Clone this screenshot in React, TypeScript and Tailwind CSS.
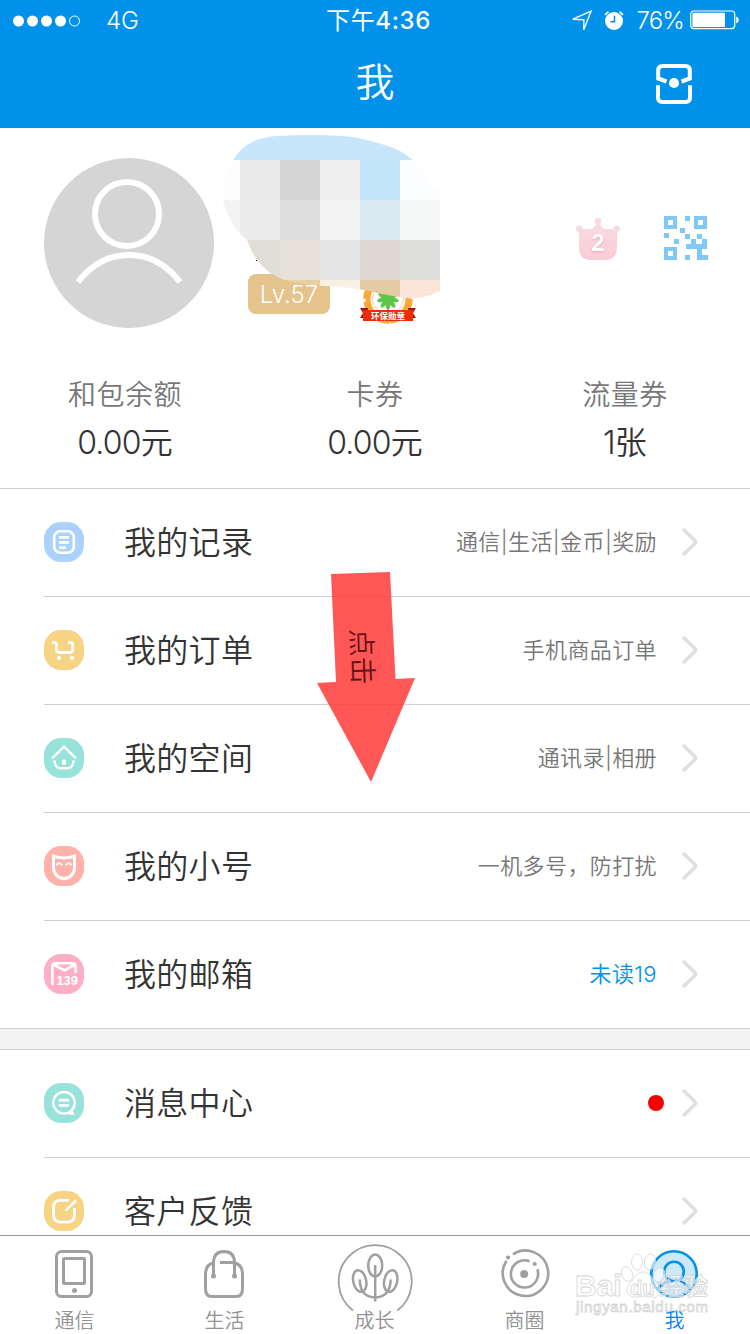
import React from 'react';

interface MenuItem {
  label: string;
  hint?: string;
  color: string;
  icon: React.ReactNode;
  highlight?: boolean;
  dot?: boolean;
}

const stats = [
  { label: '和包余额', value: '0.00元' },
  { label: '卡券', value: '0.00元' },
  { label: '流量券', value: '1张' },
];

const mainItems: MenuItem[] = [
  {
    label: '我的记录',
    hint: '通信|生活|金币|奖励',
    color: 'bg-[#abd2ff]',
    icon: (
      <>
        <rect x="10.2" y="9.3" width="19.6" height="21.4" rx="6" strokeWidth="2.6" />
        <path d="M15 15.4h10M15 20.4h10M15 25.6h7" />
      </>
    ),
  },
  {
    label: '我的订单',
    hint: '手机商品订单',
    color: 'bg-[#f7d384]',
    icon: (
      <>
        <path d="M8 12.5h2.5q1.8 0 2 1.8v5.2q0 3 3 3h10.2q3 0 3-3v-5q0-2-2-2H24" />
        <circle cx="15" cy="28" r="2.1" fill="white" stroke="none" />
        <circle cx="28" cy="28" r="2.1" fill="white" stroke="none" />
      </>
    ),
  },
  {
    label: '我的空间',
    hint: '通讯录|相册',
    color: 'bg-[#98e2dc]',
    icon: (
      <>
        <path d="M8 20.3 20 8.6l12 11.7" strokeWidth="2.4" />
        <path d="M10.4 22.5q.6 7.8 6.6 7.8h6q6 0 6.6-7.8" strokeWidth="2.4" />
        <rect x="18" y="21.5" width="4" height="5.5" rx="1.4" fill="white" stroke="none" />
      </>
    ),
  },
  {
    label: '我的小号',
    hint: '一机多号，防打扰',
    color: 'bg-[#ffb2a9]',
    icon: (
      <>
        <path d="M9.5 10.2q10.5 3.6 21 0v11.6a10.5 10.7 0 0 1-21 0z" strokeWidth="3" />
        <path d="M12.7 19.2q2.7-4.4 5.4 0M21.9 19.2q2.7-4.4 5.4 0" strokeWidth="2" />
      </>
    ),
  },
  {
    label: '我的邮箱',
    hint: '未读19',
    color: 'bg-[#ffafc3]',
    highlight: true,
    icon: (
      <>
        <path d="M8.4 31V12.3q0-3 3-3h17.2q3 0 3 3V19M9.5 10.5l11 6 10.5-6" strokeWidth="2.6" />
        <text x="12.4" y="31" className="fill-white stroke-none font-['Liberation_Sans',sans-serif] text-[13px] font-bold">
          139
        </text>
      </>
    ),
  },
];

const moreItems: MenuItem[] = [
  {
    label: '消息中心',
    color: 'bg-[#98e2dc]',
    dot: true,
    icon: (
      <>
        <circle cx="20" cy="19.8" r="10.8" strokeWidth="2.4" />
        <path d="M23.5 30.5 28 26.8 30.8 31.8q-4 .8-7.3-1.3" fill="white" stroke="none" />
        <path d="M14.7 17.2h10.3M14.7 22.4h10.3" />
      </>
    ),
  },
  {
    label: '客户反馈',
    color: 'bg-[#f7d384]',
    icon: (
      <>
        <path d="M25 9.4h-8.5q-7 0-7 7v7.7q0 7 7 7h7q7 0 7-7V17" strokeWidth="2.8" />
        <path d="M21.7 19.7 32 9.3" strokeWidth="2.4" />
      </>
    ),
  },
];

function StatusBar() {
  return (
    <div className="grid h-10 grid-cols-3 items-center pt-px text-2xl">
      <div className="flex items-center pl-[13px]">
        <svg width="68" height="12" fill="white">
          {[5.5, 19.5, 33.5, 47.5].map((x) => (
            <circle key={x} cx={x} cy="6" r="5.5" />
          ))}
          <circle cx="61.5" cy="6" r="5" fill="none" stroke="white" />
        </svg>
        <span className="ml-[25px] font-light">4G</span>
      </div>
      <div className="pl-[7px] text-center font-medium tracking-[0.6px]">
        <span className="font-normal">下午</span>4:36
      </div>
      <div className="flex items-center justify-end pr-[11px]">
        <svg width="22" height="22" fill="none" stroke="white" strokeWidth="1.4">
          <path d="M2.8 9.2 21 1.2l-7.2 18.5v-10z" />
        </svg>
        <svg className="ml-[11px]" width="22" height="22" fill="none" stroke="white">
          <circle cx="11" cy="11" r="9" fill="white" stroke="none" />
          <path d="M2.2 5A11 11 0 0 1 5.5 1.8M16.5 1.8A11 11 0 0 1 19.8 5" strokeWidth="1.8" />
          <path d="M11.5 5.8v6H7.5" stroke="#0091ea" strokeWidth="1.5" />
        </svg>
        <span className="ml-[11px] mr-[6px] text-2xl font-light tracking-[-0.8px]">76%</span>
        <svg className="-mt-px" width="49" height="20" fill="none" stroke="white">
          <rect x="0.7" y="1" width="44" height="17.6" rx="3" strokeWidth="1.2" />
          <rect x="2.4" y="2.7" width="32.6" height="14.2" rx="1" fill="white" stroke="none" />
          <path d="M46.2 6.5q2.6.8 2.6 3.5t-2.6 3.5z" fill="white" stroke="none" />
        </svg>
      </div>
    </div>
  );
}

function Header() {
  return (
    <header className="h-32 shrink-0 bg-[#0091ea] text-white">
      <StatusBar />
      <div className="grid h-[88px] grid-cols-3">
        <h1 className="col-start-2 text-center text-[39px] font-[350] leading-[84px]">我</h1>
        <svg className="ml-auto mr-[58px] mt-6" width="36" height="40" fill="none" stroke="white" strokeWidth="4">
          <path d="m10.5 17.5-8.3-3V6.5Q2.2 2 6.7 2h22.6q4.5 0 4.5 4.5v8l-8.3 3" />
          <path d="M2 21.3v12.2Q2 38 6.5 38h23q4.5 0 4.5-4.5V21.3" />
          <circle cx="18" cy="19" r="5.1" fill="white" stroke="none" />
        </svg>
      </div>
    </header>
  );
}

// each tile is [x, y, width, height, colour]
const tiles: [number, number, number, number, string][] = [
  [0, 0, 220, 25, '#c7e6fb'],
  [0, 25, 20, 40, '#fdfdfd'],
  [20, 25, 40, 40, '#e9e9e9'],
  [60, 25, 40, 40, '#d5d5d5'],
  [100, 25, 40, 40, '#eeeeee'],
  [140, 25, 40, 40, '#c2e5f9'],
  [180, 25, 40, 40, '#fbfdff'],
  [0, 65, 20, 40, '#f3f3f3'],
  [20, 65, 40, 40, '#ececec'],
  [60, 65, 40, 40, '#dfdfdf'],
  [100, 65, 40, 40, '#f4f4f4'],
  [140, 65, 40, 40, '#daebf4'],
  [180, 65, 40, 40, '#f4f7f6'],
  [0, 105, 60, 40, '#e1ded8'],
  [60, 105, 40, 40, '#e5e0d8'],
  [100, 105, 40, 40, '#e4e4e4'],
  [140, 105, 40, 40, '#ded9d3'],
  [180, 105, 40, 40, '#dfdfdd'],
  [0, 145, 100, 20, '#e6cfa2'],
  [100, 145, 40, 20, '#f9f0e4'],
  [140, 145, 40, 20, '#e4cba2'],
  [180, 145, 40, 20, '#fae5d7'],
];

function Mosaic() {
  return (
    <svg className="absolute left-[220px] top-[7px]" width="220" height="165">
      <clipPath id="smudge">
        <path d="M13 25Q19 15 27 10 40 2 57 1 90-1 123 1 138 2 150 6q18 4 30 10 7 4 13 9 8 7 12 15 3 7 6 13 4 2 9 2v101q-8 4-17 6-8 2-16 1-16-2-30-5-9-3-20-4-17-3-34-3-19-1-36-5-9-3-17-8-8-6-13-13-6-9-10-20-7-5-12-12-5-8-8-16-5-9-4-20 0-19 10-32" />
      </clipPath>
      <g clipPath="url(#smudge)">
        {tiles.map(([x, y, w, h, fill]) => (
          <rect key={`${x}-${y}`} x={x} y={y} width={w} height={h} fill={fill} shapeRendering="crispEdges" />
        ))}
      </g>
      <rect x="36" y="125" width="1" height="1" fill="#222" />
    </svg>
  );
}

function Medal() {
  return (
    <svg className="absolute left-[359px] top-[147px]" width="58" height="50">
      <circle cx="29" cy="24" r="23" fill="none" stroke="#fba83b" strokeWidth="3.5" strokeDasharray="9 3" />
      <circle cx="29" cy="24" r="20" fill="white" stroke="#fba83b" strokeWidth="5" />
      <circle cx="29" cy="24" r="15.5" fill="none" stroke="#fbd08d" strokeWidth="1" />
      <g fill="#5dc74b">
        {[0, 40, 80, 120, 160, 200, 240, 280, 320].map((a) => (
          <ellipse key={a} cx="29" cy="18.5" rx="2.2" ry="5.5" transform={`rotate(${a + 20} 29 24)`} />
        ))}
      </g>
      <path d="m1 33 8 0v10H1l3-5zM57 33l-8 0v10h8l-3-5z" fill="#a31604" />
      <path d="M4 35h50v11H4z" fill="#ee2c05" />
      <text x="29" y="43.5" textAnchor="middle" className="fill-white text-[8.5px] font-bold">
        环保勋章
      </text>
      <path d="m25 46h8l-4 3z" fill="#fba83b" />
    </svg>
  );
}

function QrIcon() {
  return (
    <svg width="44" height="44" fill="#80c8f5" shapeRendering="crispEdges">
      <path
        fillRule="evenodd"
        d="M0 0h13v13H0zM4 4v5h5V4zM30 0h13v13H30zM34 4v5h5V4zM0 31h13v13H0zM4 35v5h5v-5z"
      />
      <path d="M21 0h5v5h-5zM16 12h5v5h-5zM0 17h5v5H0zM21 18h5v5h-5zM33 18h5v5h-5zM10 23h5v5h-5zM27 23h5v5h6v-5h5v10h-5v6h6v5H33V33H22v-5h5zM21 39h5v5h-5z" />
    </svg>
  );
}

function Profile() {
  return (
    <section className="relative h-[361px] shrink-0 border-b border-[#d0d0d0]">
      <div className="flex pl-11 pt-[30px]">
        <svg width="170" height="170" fill="none" stroke="white">
          <circle cx="85" cy="85" r="85" fill="#d5d5d5" stroke="none" />
          <circle cx="83" cy="56" r="32" strokeWidth="6" />
          <path d="M34 124q21-27 51-27t51 27" strokeWidth="6" />
        </svg>
        <div className="ml-[34px] mt-[116px] h-10 w-[82px] rounded-lg bg-[#e4c38c] text-center text-2xl font-light leading-[42px] text-white">
          Lv.57
        </div>
        <svg className="ml-[246px] mt-[60px]" width="44" height="42">
          <defs>
            <linearGradient id="crown" x1="0" x2="0" y1="0" y2="1">
              <stop offset="0" stopColor="#f8dce3" />
              <stop offset="1" stopColor="#facbd5" />
            </linearGradient>
          </defs>
          <circle cx="3.2" cy="10.7" r="3.2" fill="#f8dae1" />
          <circle cx="22" cy="3.3" r="3.3" fill="#f8dae1" />
          <circle cx="40.8" cy="10.7" r="3.2" fill="#f8dae1" />
          <path d="M3 11h12q5-2 5-6h4q0 4 5 6h12v18q0 13-12 13H15Q3 42 3 29z" fill="url(#crown)" />
          <text x="22" y="33" textAnchor="middle" className="fill-white font-['Liberation_Sans',sans-serif] text-2xl font-bold drop-shadow-[0_1px_1px_#f4a0b4]">
            2
          </text>
        </svg>
        <div className="ml-11 mt-[58px]">
          <QrIcon />
        </div>
      </div>
      <Medal />
      <Mosaic />
      <div className="mt-11 grid grid-cols-3 text-center font-[350]">
        {stats.map((s) => (
          <div key={s.label}>
            <div className="h-[46px] text-[28px] leading-[46px] tracking-[0.5px] text-[#777]">{s.label}</div>
            <div className="h-12 pr-px text-[32px] leading-[50px] tracking-[-0.8px] text-[#333]">{s.value}</div>
          </div>
        ))}
      </div>
    </section>
  );
}

function MenuRow({ item, last }: { item: MenuItem; last: boolean }) {
  return (
    <div className={`flex h-[108px] shrink-0 items-center border-b border-[#d0d0d0] pb-px pr-[52px] ${last ? 'pl-11' : 'ml-11'}`}>
      <svg className={`rounded-[17px] ${item.color}`} width="40" height="40" fill="none" stroke="white" strokeWidth="2.8">
        {item.icon}
      </svg>
      <span className="ml-10 pt-[2px] text-[32px] font-[350] tracking-[0.3px] text-[#333]">{item.label}</span>
      <span
        className={`ml-auto pt-px text-[22px] font-[350] tracking-[0.4px] ${item.highlight ? 'text-[#0091ea]' : 'text-[#777]'}`}
      >
        {item.hint}
      </span>
      {item.dot && <span className="-mr-[7px] h-4 w-4 rounded-full bg-[#f90000]" />}
      <svg className="ml-[24px]" width="17" height="32" fill="none" stroke="#dfdfdf" strokeWidth="3.6">
        <path d="m2 3 11.8 11.5q1.5 1.5 0 3L2 29" />
      </svg>
    </div>
  );
}

const tabs = [
  {
    label: '通信',
    icon: (
      <>
        <rect x="16.5" y="7.5" width="35" height="45" rx="5" />
        <rect x="23.5" y="14.5" width="21" height="25" rx="0.5" />
        <circle cx="34.5" cy="46.5" r="2.5" fill="currentColor" stroke="none" />
      </>
    ),
  },
  {
    label: '生活',
    icon: (
      <>
        <path d="M24 18.5q-8.5 2-8.5 12v14q0 8 6 8h25q6 0 6-8v-14q0-12-12-12H30" />
        <path d="M23.5 32V19q0-11.5 10.5-11.5T44.5 19v13" />
        <circle cx="23.5" cy="32" r="2.5" fill="currentColor" stroke="none" />
        <circle cx="44.5" cy="32" r="2.5" fill="currentColor" stroke="none" />
      </>
    ),
  },
  {
    label: '成长',
    icon: (
      <>
        <path d="M13 66.5a36.5 36.5 0 1 1 44.4 0" strokeWidth="1.8" />
        <g strokeWidth="2.5">
          <ellipse cx="35.2" cy="21.5" rx="7" ry="11" />
          <ellipse cx="19.7" cy="37" rx="6.5" ry="11" transform="rotate(-12 19.7 37)" />
          <ellipse cx="50.7" cy="37" rx="6.5" ry="11" transform="rotate(12 50.7 37)" />
          <path d="M35.2 21v36.5M19.7 35.5Q20.2 53 35.2 53.5 50.2 53 50.7 35.5" />
        </g>
      </>
    ),
  },
  {
    label: '商圈',
    icon: (
      <>
        <path d="M23 10.3a22.7 22.7 0 1 1-6.5 6.5" strokeWidth="2.6" />
        <path d="M39.5 17.3a13.6 13.6 0 1 0 7.8 8" strokeWidth="2.6" />
        <circle cx="34.2" cy="30" r="4" fill="currentColor" stroke="none" />
        <circle cx="18" cy="13.5" r="2.1" fill="currentColor" stroke="none" />
        <circle cx="44.7" cy="20" r="2.1" fill="currentColor" stroke="none" />
      </>
    ),
  },
  {
    label: '我',
    icon: (
      <>
        <circle cx="34" cy="30" r="22.7" fill="#cce8fa" strokeWidth="2.6" />
        <circle cx="34" cy="27.5" r="9.8" strokeWidth="2.6" />
        <path d="M17.5 45q4-5.5 11-7.5M50.5 45q-4-5.5-11-7.5" strokeWidth="2.6" />
      </>
    ),
  },
];

function Watermark() {
  return (
    <svg
      className="absolute bottom-0 left-[570px] fill-white/60 stroke-[#d4d4d4] font-['Liberation_Sans','Noto_Sans_CJK_SC',sans-serif]"
      width="150"
      height="92"
      strokeWidth="0.8"
    >
      <g>
        <ellipse cx="57" cy="32" rx="5.5" ry="7.5" transform="rotate(-20 57 32)" />
        <ellipse cx="67" cy="20" rx="5.5" ry="8" />
        <ellipse cx="80" cy="20" rx="5.5" ry="8" transform="rotate(10 80 20)" />
        <ellipse cx="89" cy="33" rx="5.5" ry="7.5" transform="rotate(20 89 33)" />
        <path d="M73 30q6 0 10 7 9 7 7 14-2 6-9 4-8-2-14 0-8 1-10-5-1-7 6-12 4-8 10-8" />
      </g>
      <text x="5" y="54" className="text-[30px] font-bold">Bai</text>
      <text x="60" y="53" className="text-[20px] font-bold">du</text>
      <text x="90" y="53" className="text-[24px] font-bold">经验</text>
      <text x="6" y="70" textLength="132" className="text-[15px]">jingyan.baidu.com</text>
    </svg>
  );
}

function TabBar() {
  return (
    <nav className="relative flex h-[99px] shrink-0 border-t border-[#999] bg-white">
      <Watermark />
      {tabs.map((tab) => (
        <div
          key={tab.label}
          className={`flex w-[150px] flex-col items-center pr-px ${tab.label === '我' ? 'text-[#0091ea]' : 'text-[#a0a0a0]'}`}
        >
          <svg className="mt-2 h-[66px] w-[70px] shrink-0 overflow-visible" fill="none" stroke="currentColor" strokeWidth="3">
            {tab.icon}
          </svg>
          <span
            className={`-mt-[2px] text-[20px] font-[350] leading-[26px] ${tab.label === '我' ? 'relative text-[#0a80f5]' : 'text-[#929292]'}`}
          >
            {tab.label}
          </span>
        </div>
      ))}
    </nav>
  );
}

function ClickArrow() {
  return (
    <svg className="absolute left-[310px] top-[565px]" width="110" height="222">
      <path d="m21 9 59-2 5.5 107 19.5-1-44 104L7 118l19-1z" fill="#ff3f3f" fillOpacity="0.88" />
      <text transform="translate(41 64) rotate(88)" className="fill-[#641414] text-[28px] font-[350]">
        点击
      </text>
    </svg>
  );
}

export default function App() {
  return (
    <div className="relative flex h-[1334px] w-[750px] flex-col overflow-hidden bg-white font-['Inter','Noto_Sans_CJK_SC',sans-serif]">
      <Header />
      <main className="flex min-h-0 flex-1 flex-col overflow-hidden">
        <Profile />
        {mainItems.map((item, i) => (
          <MenuRow key={item.label} item={item} last={i === mainItems.length - 1} />
        ))}
        <div className="h-[21px] shrink-0 border-b border-[#d0d0d0] bg-[#f3f3f3]" />
        {moreItems.map((item) => (
          <MenuRow key={item.label} item={item} last={false} />
        ))}
      </main>
      <TabBar />
      <ClickArrow />
    </div>
  );
}
